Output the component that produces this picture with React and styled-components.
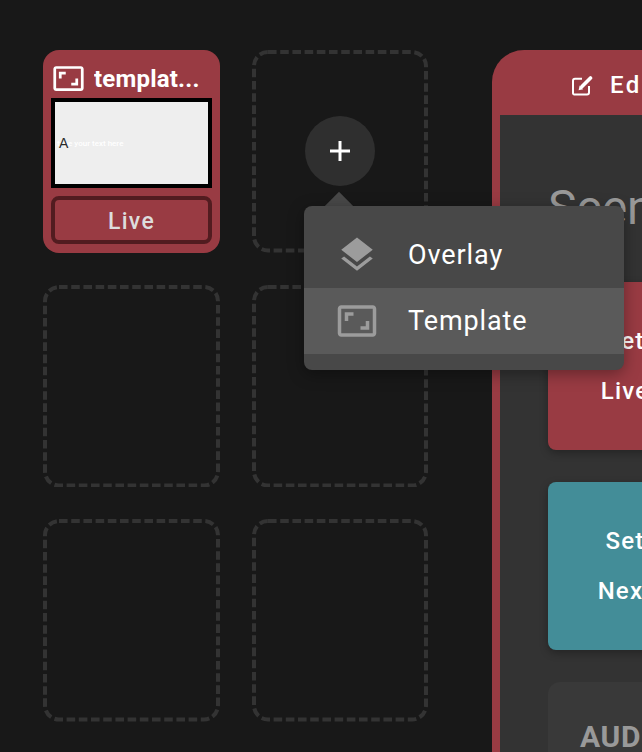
import React from "react";
import styled, { createGlobalStyle } from "styled-components";

const GlobalStyle = createGlobalStyle`
  html, body {
    margin: 0;
    height: 100%;
    overflow: hidden;
    background: #181818;
  }
  #root {
    height: 100%;
  }
`;

const Page = styled.div`
  display: flex;
  align-items: flex-start;
  gap: 64px;
  height: 100%;
  box-sizing: border-box;
  padding: 50px 0 0 43px;
  overflow: hidden;
  font-family: Roboto, "Liberation Sans", sans-serif;
`;

const SlotGrid = styled.div`
  flex: none;
  display: grid;
  grid-template-columns: 177px 176px;
  grid-auto-rows: 202.5px;
  gap: 32px;
`;

const EmptySlot = styled.div`
  position: relative;
  display: flex;
  align-items: center;
  justify-content: center;
`;

const DashOutline = styled.svg`
  position: absolute;
  inset: 0;
  width: 100%;
  height: 100%;
  pointer-events: none;
`;

const DashRect = styled.rect`
  x: 2px;
  y: 2px;
  width: calc(100% - 4px);
  height: calc(100% - 4px);
  rx: 14px;
  fill: none;
  stroke: #333333;
  stroke-width: 4px;
  stroke-dasharray: 8.6 3.6;
`;

const AddButton = styled.button`
  position: relative;
  display: flex;
  align-items: center;
  justify-content: center;
  width: 70px;
  height: 70px;
  padding: 0;
  border: none;
  border-radius: 50%;
  background: #2f2f2f;
  color: #fff;
`;

const MenuArrow = styled.div`
  position: absolute;
  z-index: 2;
  top: 146px;
  left: 77px;
  width: 20px;
  height: 20px;
  background: #484848;
  transform: rotate(45deg);
`;

const Menu = styled.div`
  position: absolute;
  z-index: 3;
  top: 156px;
  left: 52px;
  width: 320px;
  padding-bottom: 16px;
  border-radius: 8px;
  background: #484848;
  box-shadow: 0 4px 16px rgba(0, 0, 0, 0.35);
`;

const MenuItem = styled.div`
  display: flex;
  align-items: center;
  height: ${(p) => p.$height}px;
  padding-left: 32px;
  padding-top: ${(p) => p.$top || 0}px;
  box-sizing: border-box;
  background: ${(p) => (p.$active ? "#5a5a5a" : "transparent")};
  color: #fff;
  font-size: 27px;
  letter-spacing: 0.9px;
  svg {
    flex: none;
    margin-right: 30px;
    fill: #9c9c9c;
  }
`;

const SceneCard = styled.div`
  display: flex;
  flex-direction: column;
  box-sizing: border-box;
  padding: 0 8px;
  border-radius: 16px;
  background: #993b43;
`;

const CardHeader = styled.div`
  display: flex;
  align-items: center;
  gap: 9px;
  height: 48px;
  box-sizing: border-box;
  padding: 9px 0 0 1px;
  color: #fff;
  font-size: 24px;
  font-weight: 700;
  letter-spacing: 0.2px;
  svg {
    flex: none;
    fill: #fff;
  }
`;

const CardTitle = styled.span`
  overflow: hidden;
  white-space: nowrap;
  text-overflow: ellipsis;
`;

const Thumbnail = styled.div`
  position: relative;
  display: flex;
  align-items: center;
  height: 90px;
  box-sizing: border-box;
  padding-left: 2px;
  border: 4px solid #000;
  background: #eeeeee;
  color: #fff;
  font-size: 8px;
  font-weight: 500;
  white-space: nowrap;
`;

const ThumbGlyph = styled.span`
  position: absolute;
  left: 4px;
  top: 33px;
  color: #2a2a2a;
  font-family: "Liberation Sans", sans-serif;
  font-size: 14px;
  line-height: 16px;
`;

const LiveBadge = styled.div`
  display: flex;
  align-items: center;
  justify-content: center;
  height: 48px;
  margin-top: 8px;
  padding-top: 2px;
  box-sizing: border-box;
  border: 4px solid #521c20;
  border-radius: 8px;
  color: #ddd;
  font-size: 23px;
  font-weight: 500;
  letter-spacing: 1.3px;
`;

const Panel = styled.section`
  flex: none;
  width: 400px;
  height: 760px;
  box-sizing: border-box;
  padding: 0 8px;
  border-radius: 32px 32px 0 0;
  background: #993b43;
`;

const PanelHeader = styled.header`
  display: flex;
  align-items: center;
  gap: 17px;
  height: 65px;
  padding: 5px 0 0 72px;
  box-sizing: border-box;
  color: #fff;
  font-size: 24px;
  font-weight: 500;
  letter-spacing: 2.4px;
`;

const PanelBody = styled.div`
  display: flex;
  flex-direction: column;
  height: 695px;
  box-sizing: border-box;
  padding: 64px 0 0 48px;
  background: #333333;
`;

const SceneTitle = styled.h1`
  margin: 0 0 46px;
  color: #999;
  font-size: 48px;
  font-weight: 400;
  line-height: 57px;
`;

const ActionButton = styled.button`
  flex: none;
  width: 154px;
  height: 168px;
  margin-bottom: 32px;
  padding: 0;
  border: none;
  border-radius: 8px;
  background: ${(p) => p.$color};
  box-shadow: 0 3px 8px rgba(0, 0, 0, 0.3);
  color: #fff;
  font-family: inherit;
  font-size: 24px;
  font-weight: 500;
  line-height: 50px;
  letter-spacing: 1.2px;
`;

const AudioCard = styled.div`
  width: 300px;
  height: 120px;
  box-sizing: border-box;
  padding: 37px 0 0 32px;
  border-radius: 12px;
  background: #393939;
  color: #999;
  font-size: 30px;
  font-weight: 700;
  line-height: 36px;
  letter-spacing: 0.6px;
`;

const AspectRatioIcon = ({ size }) => (
  <svg width={size} height={size} viewBox="0 0 24 24">
    <path d="M19 12h-2v3h-3v2h5v-5zM7 9h3V7H5v5h2V9zm14-6H3c-1.1 0-2 .9-2 2v14c0 1.1.9 2 2 2h18c1.1 0 2-.9 2-2V5c0-1.1-.9-2-2-2zm0 16.01H3V4.99h18v14.02z" />
  </svg>
);

const LayersIcon = ({ size }) => (
  <svg width={size} height={size} viewBox="0 0 24 24">
    <path d="M11.99 18.54l-7.37-5.73L3 14.07l9 7 9-7-1.63-1.27-7.38 5.74zM12 16l7.36-5.73L21 9l-9-7-9 7 1.63 1.27L12 16z" />
  </svg>
);

const PlusIcon = () => (
  <svg width="22" height="22" viewBox="0 0 22 22" fill="none" stroke="#fff" strokeWidth="3">
    <path d="M11 1v20M1 11h20" />
  </svg>
);

const EditIcon = () => (
  <svg width="21" height="21" viewBox="0 0 21 21" fill="none">
    <path
      d="M10 3.8H3a2 2 0 0 0-2 2v12.4a1.2 1.2 0 0 0 1.2 1.2H15a2 2 0 0 0 2-2V11"
      stroke="#fff"
      strokeWidth="2"
    />
    <path d="M10 11.5l8.5-8.5" stroke="#fff" strokeWidth="3.6" strokeLinecap="round" />
    <path d="M6.6 15.2l1-4.6 3.6 3.6z" fill="#fff" />
  </svg>
);

const Slot = ({ children }) => (
  <EmptySlot>
    <DashOutline>
      <DashRect />
    </DashOutline>
    {children}
  </EmptySlot>
);

const App = () => {
  return (
    <Page>
      <GlobalStyle />
      <SlotGrid>
        <SceneCard>
          <CardHeader>
            <AspectRatioIcon size={33} />
            <CardTitle>templat...</CardTitle>
          </CardHeader>
          <Thumbnail>
            type your text here
            <ThumbGlyph>A</ThumbGlyph>
          </Thumbnail>
          <LiveBadge>Live</LiveBadge>
        </SceneCard>
        <Slot>
          <AddButton>
            <PlusIcon />
          </AddButton>
          <MenuArrow />
          <Menu>
            <MenuItem $height={82} $top={16}>
              <LayersIcon size={42} />
              Overlay
            </MenuItem>
            <MenuItem $height={66} $active>
              <AspectRatioIcon size={42} />
              Template
            </MenuItem>
          </Menu>
        </Slot>
        <Slot />
        <Slot />
        <Slot />
        <Slot />
      </SlotGrid>
      <Panel>
        <PanelHeader>
          <EditIcon />
          Edit
        </PanelHeader>
        <PanelBody>
          <SceneTitle>Scene</SceneTitle>
          <ActionButton $color="#993b43">
            Set
            <br />
            Live
          </ActionButton>
          <ActionButton $color="#438d98">
            Set
            <br />
            Next
          </ActionButton>
          <AudioCard>AUDIO</AudioCard>
        </PanelBody>
      </Panel>
    </Page>
  );
};

export default App;
